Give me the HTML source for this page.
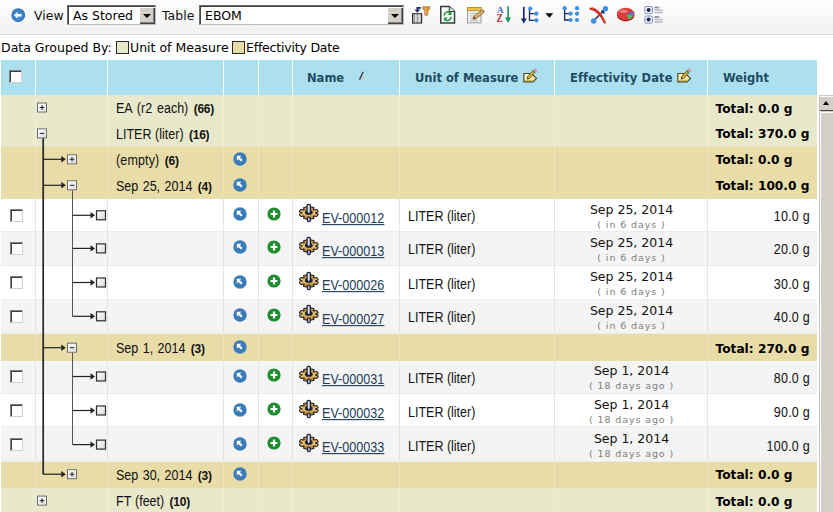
<!DOCTYPE html>
<html lang="en"><head><meta charset="utf-8"><title>EBOM</title>
<style>
html,body{margin:0;padding:0}
body{width:833px;height:512px;position:relative;overflow:hidden;background:#fff;font-family:"DejaVu Sans","Liberation Sans",sans-serif;font-size:11px;color:#000}
.abs{position:absolute}
.toolbar{position:absolute;left:0;top:0;width:833px;height:34px;border-bottom:1px solid #dcdcdc;background:linear-gradient(#fefefe 0,#f8f8f8 45%,#f1f1f1 100%)}
.toolbar .lbl{position:absolute;top:9px;font-size:12.5px;line-height:14px;color:#111}
.sel{position:absolute;top:5px;height:18px;border:1px solid #6b6b6b;border-right-color:#bdbdbd;border-bottom-color:#bdbdbd;box-shadow:inset 1px 1px 0 #404040;background:#fff;font-size:12.5px;line-height:19px}
.sel span{position:absolute;left:5px;top:0;white-space:nowrap}
.sel .btn{position:absolute;right:0;top:1px;width:16px;height:16.5px;background:#d4d0c8;box-shadow:inset 1px 1px 0 #fff,inset -1px -1px 0 #404040,inset -2px -2px 0 #808080}
.sel .btn:after{content:"";position:absolute;left:4px;top:6.500px;border:4px solid transparent;border-top:4px solid #000;border-bottom:none}
.tico{position:absolute;top:5px;width:20px;height:20px}
.grp{position:absolute;left:1px;top:41px;height:14px;line-height:14px;font-size:12.5px;white-space:nowrap}
.sw{position:absolute;top:41px;width:11px;height:11px;border:1px solid #2a2a2a}
.thead{position:absolute;left:0;top:60px;width:817px;height:35px}
.th{position:absolute;top:0;height:35px;background:#ade0ef}
.ht{position:absolute;top:11px;font-weight:bold;font-size:11.5px;line-height:14px;color:#214a63;white-space:nowrap}
.sort{position:absolute;left:64.700px;top:10.500px}
.edit{position:absolute;top:7.500px;width:16px;height:16px}
.cb{position:absolute;left:9px;width:11px;height:11px;background:#fff;border:1px solid #808080;border-right-color:#d4d0c8;border-bottom-color:#d4d0c8;box-shadow:inset 1px 1px 0 #404040}
.th .cb{top:10.300px;left:7.700px}
.tbody{position:absolute;left:0;top:0;width:817px;height:512px}
.row{position:absolute;left:1px;width:816px;white-space:nowrap}
.row.g1{background:#e8e8cb}
.row.g2{background:#e8dca8}
.row.item{background:#fff;box-shadow:inset 0 -1px 0 #ebebeb}
.row.item.a1{background:#f4f4f4}
.vd{position:absolute;top:0;bottom:0;width:1px;background:rgba(255,255,255,.25)}
.item .vd{background:#e4e4e8}
.row .cb{top:10px}
.gl{position:absolute;left:115px;top:7px;font-family:"Liberation Sans",sans-serif;font-size:12.5px;line-height:14px;color:#111;word-spacing:1px;transform:scaleY(1.1);transform-origin:0 11.3px}
.gl b{font-size:12px;margin-left:5.400px;letter-spacing:-.25px;word-spacing:0}
.tot{position:absolute;left:714.5px;top:6.5px;font-weight:bold;font-size:12.2px;line-height:14px;color:#000}
.ic{position:absolute}
.nav{left:232.300px;top:5px;width:14px;height:14px}
.item .nav{top:8.500px}
.add{left:266.100px;top:7.700px;width:14px;height:14px}
.gear{left:298px;top:4.500px;width:20px;height:20px}
.lnk{position:absolute;left:321px;top:13px;font-family:"Liberation Sans",sans-serif;font-size:12.6px;line-height:14px;color:#1c3a5a;text-decoration:underline;transform:scaleY(1.1);transform-origin:0 11.3px}
.uom{position:absolute;left:407px;top:11.500px;font-family:"Liberation Sans",sans-serif;font-size:12.5px;line-height:14px;color:#111;transform:scaleY(1.1);transform-origin:0 11.3px}
.dt{position:absolute;left:554px;width:153px;top:4px;text-align:center;font-size:12.5px;line-height:14px;color:#111}
.rel{position:absolute;left:554px;width:153px;top:20px;text-align:center;font-size:9.5px;line-height:12px;color:#7e7e7e;letter-spacing:.9px}
.wt{position:absolute;right:7px;top:11.500px;letter-spacing:.25px;font-family:"Liberation Sans",sans-serif;font-size:12.5px;line-height:14px;color:#111;transform:scaleY(1.1);transform-origin:0 11.3px}
.tree{position:absolute}
.sbar{position:absolute;left:819px;top:95px;width:14px;height:417px;background:#d3cfc7;border-left:1px solid #c2c2c2;border-top:1px solid #c8c8c8;box-shadow:inset 1px 1px 0 #fff}
.sbar .up{position:absolute;left:0;top:1px;width:14px;height:13px;background:#d3cfc7;border-bottom:1.500px solid #4a4846}
.sbar .up:after{content:"";position:absolute;left:3.200px;top:3.700px;border:3.600px solid transparent;border-bottom:4px solid #000;border-top:none}
.sbar .gap{position:absolute;left:1px;top:15.500px;width:13px;height:1px;background:#fff}

.ct{position:absolute;left:0;width:816px;height:34px}

</style></head>
<body>
<svg width="0" height="0" style="position:absolute">
<defs>
<radialGradient id="gb" cx="40%" cy="35%" r="70%"><stop offset="0" stop-color="#5fa0d8"/><stop offset="1" stop-color="#2a6fb0"/></radialGradient>
<radialGradient id="gg" cx="40%" cy="35%" r="70%"><stop offset="0" stop-color="#3db54a"/><stop offset="1" stop-color="#168a2a"/></radialGradient>
<linearGradient id="ggold" x1="0" y1="0" x2="0" y2="1"><stop offset="0" stop-color="#b88a34"/><stop offset=".5" stop-color="#ecc878"/><stop offset="1" stop-color="#b07c28"/></linearGradient>
<symbol id="i-nav" viewBox="0 0 14 14"><circle cx="7" cy="7" r="6.700" fill="#3a7cba"/><path d="M3.800 3.800h4.600l-1.500 1.500 2.700 2.700-1.600 1.600-2.700-2.700-1.500 1.500z" fill="#fff"/></symbol>
<symbol id="i-add" viewBox="0 0 14 14"><circle cx="7" cy="7" r="6.600" fill="#1f8c2e"/><path d="M7 3.600v6.800M3.600 7h6.800" stroke="#fff" stroke-width="2.200" fill="none"/></symbol>
<symbol id="i-gear" viewBox="0 0 20 20"><path d="M10.6 5.9L11.9 4.3L14.6 5.0L13.7 6.8L14.9 7.5L17.6 6.9L18.7 8.6L16.1 9.5L16.1 10.5L18.7 11.4L17.6 13.1L14.9 12.5L13.7 13.2L14.6 15.0L11.9 15.7L10.6 14.1L9.0 14.1L7.7 15.7L5.0 15.0L5.9 13.2L4.7 12.5L2.0 13.1L0.9 11.4L3.5 10.5L3.5 9.5L0.9 8.6L2.0 6.9L4.7 7.5L5.9 6.8L5.0 5.0L7.7 4.3L9.0 5.9z" fill="#cfa048" stroke="#1e1810" stroke-width="1.900" stroke-linejoin="round"/><path d="M10.6 5.9L11.9 4.3L14.6 5.0L13.7 6.8L14.9 7.5L17.6 6.9L18.7 8.6L16.1 9.5L16.1 10.5L18.7 11.4L17.6 13.1L14.9 12.5L13.7 13.2L14.6 15.0L11.9 15.7L10.6 14.1L9.0 14.1L7.7 15.7L5.0 15.0L5.9 13.2L4.7 12.5L2.0 13.1L0.9 11.4L3.5 10.5L3.5 9.5L0.9 8.6L2.0 6.9L4.7 7.5L5.9 6.8L5.0 5.0L7.7 4.3L9.0 5.9z" fill="url(#ggold)" stroke="none"/><ellipse cx="9.800" cy="9.400" rx="3.900" ry="2.300" fill="#241e2a"/><rect x="8" y="1.400" width="3.500" height="8.800" rx="1.400" fill="#8f9cc8" stroke="#1c1e34" stroke-width="1.100"/><rect x="9" y="2.400" width="1.200" height="7.200" fill="#dfe6fa"/><rect x="8.300" y="14" width="3" height="4.800" rx="1.200" fill="#9aa6cc" stroke="#1c1e34" stroke-width="1.100"/></symbol>
<symbol id="i-edit" viewBox="0 0 16 16"><path d="M.8 5.500h6l3.500 1.800 3.300 3-3.500 3.600H.8z" fill="#f3ecb4" stroke="#4a4222" stroke-width="1.100" stroke-linejoin="round"/><path d="M1.600 12.800h8.200l2.600-2.700" stroke="#b8a040" stroke-width="1" fill="none"/><path d="M2 7h3.500" stroke="#fff" stroke-width="1.200"/><path d="M4.800 10.400L11.200 3.400" stroke="#5c4a18" stroke-width="3.200" stroke-linecap="butt"/><path d="M5.200 10L11 3.600" stroke="#d8b040" stroke-width="2" stroke-linecap="butt"/><path d="M3.600 11.700l1-2.200 1.400 1.300z" fill="#3a3010"/><path d="M10.300 4.400l1.500-1.600" stroke="#2c8a5c" stroke-width="2.400"/><circle cx="12" cy="2.500" r="1.500" fill="#e8949c" stroke="#b06470" stroke-width=".5"/></symbol>
</defs>
</svg>
<div class="toolbar">
<svg class="abs" style="left:10.600px;top:8.100px" width="14.400" height="14.400" viewBox="0 0 14 14"><circle cx="7" cy="7" r="6.700" fill="#3676b6"/><circle cx="7" cy="7" r="5.300" fill="#3f86c8"/><path d="M2.800 7l3.600-3.300v2.100h3.800v2.400h-3.800v2.100z" fill="#fff"/></svg>
<span class="lbl" style="left:34px">View</span>
<div class="sel" style="left:67px;width:87px"><span>As Stored</span><i class="btn"></i></div>
<span class="lbl" style="left:162px">Table</span>
<div class="sel" style="left:199px;width:203px"><span>EBOM</span><i class="btn"></i></div>
<!-- column filter -->
<svg class="tico" style="left:411px" viewBox="0 0 20 20"><rect x="1.600" y="8.800" width="9" height="9.200" fill="#cfcfcf" stroke="#2c2c2c" stroke-width="1.200"/><path d="M4.600 9.300v8.200M7.700 9.300v8.200" stroke="#fff" stroke-width="1"/><path d="M3.800 9.300v8.200M6.900 9.300v8.200" stroke="#666" stroke-width=".7"/><path d="M9.800 2.800H6.400V4.800" stroke="#1a2568" stroke-width="1.800" fill="none"/><path d="M3.600 4.600h5.600L6.400 7.800z" fill="#1a2568"/><path d="M11.800 1.800h7v2l-2 2.200v4.200h-3V6l-2-2.200z" fill="#dc9438" stroke="#b06a1c" stroke-width=".7"/><path d="M14.800 3v6.600" stroke="#f0b868" stroke-width="1"/></svg>
<!-- refresh page -->
<svg class="tico" style="left:439px" viewBox="0 0 20 20"><path d="M1.800 1.500h8.500l5.200 5v11.400h-13.700z" fill="#fff" stroke="#3a3a3a" stroke-width="1.500"/><path d="M10.300 1.500v5h5.200" fill="#e8e8e8" stroke="#3a3a3a" stroke-width="1.100"/><path d="M5.200 10.600a3.600 3.600 0 0 1 6-2.800" stroke="#239a3c" stroke-width="1.700" fill="none"/><path d="M12.600 6v4h-4z" fill="#239a3c"/><path d="M12.200 11.800a3.600 3.600 0 0 1-6 2.800" stroke="#239a3c" stroke-width="1.700" fill="none"/><path d="M4.800 16.400v-4h4z" fill="#239a3c"/></svg>
<!-- notepad edit -->
<svg class="tico" style="left:466px" viewBox="0 0 20 20"><rect x="1.500" y="2.500" width="13.500" height="15.300" fill="#ececec" stroke="#9a9a9a" stroke-width="1"/><rect x="1.500" y="2.500" width="13.500" height="3.200" fill="#e6c24a" stroke="#b89020" stroke-width=".8"/><path d="M4 8.600h8M4 11h5M4 13.400h4M4 15.700h8" stroke="#b8b8b8" stroke-width=".9"/><path d="M9 12.400L16.600 6.400" stroke="#8a6a3a" stroke-width="3.800" stroke-linecap="round"/><path d="M9.200 12.250L16.400 6.550" stroke="#d9b070" stroke-width="2.300" stroke-linecap="round"/><path d="M6.600 14.400l1.300-2.900 1.900 2.300z" fill="#5a4020"/></svg>
<!-- sort A-Z -->
<svg class="tico" style="left:496px" viewBox="0 0 20 20"><text x="1" y="7.800" font-family="Liberation Serif,serif" font-weight="bold" font-size="9" fill="#3b62c4">A</text><text transform="translate(.6 17.400) scale(.82 1)" font-family="Liberation Serif,serif" font-weight="bold" font-size="11.500" fill="#c8303a">Z</text><path d="M12.100 1.200v13" stroke="#1d9654" stroke-width="1.600"/><path d="M9.100 12.400h6L12.100 18z" fill="#1d9654"/></svg>
<!-- sort tree -->
<svg class="tico" style="left:520px" viewBox="0 0 20 20"><path d="M3.800 1.800v13" stroke="#1b2a70" stroke-width="1.700"/><path d="M.8 13.600h6L3.800 18.600z" fill="#1b2a70"/><path d="M9.500 4.500v10.800h5M9.500 8.700h5" stroke="#1c2c58" stroke-width="1.300" fill="none"/><circle cx="10.300" cy="3.600" r="2.100" fill="#3c90e4"/><circle cx="16.300" cy="8.700" r="2.100" fill="#3c90e4"/><circle cx="16.300" cy="15.300" r="2.100" fill="#3c90e4"/></svg>
<svg class="abs" style="left:545px;top:12px" width="9" height="7" viewBox="0 0 9 7"><path d="M.5 1.200h7.800L4.400 5.800z" fill="#000"/></svg>
<!-- tree dots -->
<svg class="tico" style="left:561px" viewBox="0 0 20 20"><path d="M3.600 4v11h4.500M3.600 8.700h4.500" stroke="#1c2c58" stroke-width="1.300" fill="none"/><circle cx="3.600" cy="3.200" r="2.100" fill="#3c90e4"/><circle cx="9.600" cy="8.700" r="2.100" fill="#3c90e4"/><circle cx="9.600" cy="15" r="2.100" fill="#3c90e4"/><circle cx="16" cy="3.200" r="2.100" fill="#3c90e4"/><circle cx="16" cy="8.700" r="2.100" fill="#3c90e4"/><circle cx="16" cy="15" r="2.100" fill="#3c90e4"/></svg>
<!-- disconnect -->
<svg class="tico" style="left:589px" viewBox="0 0 20 20"><path d="M4.500 16L16.500 3.800" stroke="#1c2c58" stroke-width="1.300"/><path d="M1.500 3.600C7 4.500 12 9.500 15.800 17.500" stroke="#c42c18" stroke-width="2.300" fill="none" stroke-linecap="round"/><path d="M3 2.600C8.500 4 13 8 15.800 17.500" stroke="#d8503c" stroke-width="1" fill="none"/><circle cx="4.600" cy="16" r="2.700" fill="#3c90e4"/><circle cx="16.400" cy="3.800" r="2.700" fill="#3c90e4"/><path d="M12.500 5.500l3 3" stroke="#14205a" stroke-width="1.600"/></svg>
<!-- pie -->
<svg class="tico" style="left:616px" viewBox="0 0 20 20"><ellipse cx="9.700" cy="10.200" rx="8.700" ry="6.200" fill="#9c1c1c"/><ellipse cx="9.700" cy="8.900" rx="8.700" ry="6.200" fill="#dc3c3c"/><path d="M10.500 9.600L16.200 6.400a8 5.600 0 0 1 1.200 3.800z" fill="#4a7ae0"/><path d="M10.500 9.600L17 10.400a8 5 0 0 1-4.600 3.900z" fill="#4cbf5c"/><ellipse cx="7.500" cy="6.200" rx="4.500" ry="1.800" fill="#f4a0a0" opacity=".6"/></svg>
<!-- list options -->
<svg class="tico" style="left:644px" viewBox="0 0 20 20"><rect x=".8" y="1.500" width="7.600" height="7.200" rx="1.500" fill="#eef2fa" stroke="#7f92b8" stroke-width="1"/><circle cx="4.600" cy="5.100" r="2" fill="#1c2c58"/><rect x=".8" y="11" width="7.600" height="7.200" rx="1.500" fill="#eef2fa" stroke="#7f92b8" stroke-width="1"/><circle cx="4.600" cy="14.600" r="2" fill="#1c2c58"/><path d="M10.500 2.500h5M10.500 5h8M10.500 7.500h8M10.500 12h5M10.500 14.500h8M10.500 17h8" stroke="#b4b8c0" stroke-width="1.300"/><path d="M10.500 2.500h4M10.500 12h4" stroke="#8a8e98" stroke-width="1.300"/></svg>
</div>
<div class="grp">Data Grouped By:</div>
<i class="sw" style="left:116px;background:#e8e8cb"></i>
<div class="grp" style="left:130px">Unit of Measure</div>
<i class="sw" style="left:232px;background:#e8dca8"></i>
<div class="grp" style="left:246px;letter-spacing:-.2px">Effectivity Date</div>
<div class="thead">
<div class="th" style="left:1px;width:34px"><span class="cb"></span></div>
<div class="th" style="left:36px;width:71px"></div>
<div class="th" style="left:108px;width:115px"></div>
<div class="th" style="left:224px;width:34px"></div>
<div class="th" style="left:259px;width:33px"></div>
<div class="th" style="left:293px;width:106px"><span class="ht" style="left:14px">Name</span><svg class="sort" width="9" height="10" viewBox="0 0 9 10"><path d="M4.800 4.500l2.400 4h-4.500z" fill="#d8c4c8"/><path d="M1.500 8.800L5.200 .8" stroke="#3c3c40" stroke-width="1.400" fill="none"/></svg></div>
<div class="th" style="left:400px;width:154px"><span class="ht" style="left:15px">Unit of Measure</span><svg class="edit" style="left:123px"><use href="#i-edit"/></svg></div>
<div class="th" style="left:555px;width:152px"><span class="ht" style="left:15px;letter-spacing:.1px">Effectivity Date</span><svg class="edit" style="left:121.500px"><use href="#i-edit"/></svg></div>
<div class="th" style="left:708px;width:109px"><span class="ht" style="left:15px">Weight</span></div>
</div>
<div class="tbody">
<div class="row g1" style="top:95px;height:26px"><i class="vd" style="left:34px"></i><i class="vd" style="left:106px"></i><i class="vd" style="left:222px"></i><i class="vd" style="left:257px"></i><i class="vd" style="left:291px"></i><i class="vd" style="left:398px"></i><i class="vd" style="left:553px"></i><i class="vd" style="left:706px"></i><div class="ct" style="top:0.0px"><span class="gl" style="word-spacing:1.400px">EA (r2 each)<b>(66)</b></span><span class="tot">Total: 0.0 g</span></div></div>
<div class="row g1" style="top:121px;height:26px"><i class="vd" style="left:34px"></i><i class="vd" style="left:106px"></i><i class="vd" style="left:222px"></i><i class="vd" style="left:257px"></i><i class="vd" style="left:291px"></i><i class="vd" style="left:398px"></i><i class="vd" style="left:553px"></i><i class="vd" style="left:706px"></i><div class="ct" style="top:-0.1px"><span class="gl" style="word-spacing:.200px">LITER (liter)<b>(16)</b></span><span class="tot">Total: 370.0 g</span></div></div>
<div class="row g2" style="top:147px;height:26px"><i class="vd" style="left:34px"></i><i class="vd" style="left:106px"></i><i class="vd" style="left:222px"></i><i class="vd" style="left:257px"></i><i class="vd" style="left:291px"></i><i class="vd" style="left:398px"></i><i class="vd" style="left:553px"></i><i class="vd" style="left:706px"></i><div class="ct" style="top:-0.2px"><span class="gl" style="word-spacing:0;letter-spacing:.14px">(empty)<b>(6)</b></span><svg class="ic nav"><use href="#i-nav"/></svg><span class="tot">Total: 0.0 g</span></div></div>
<div class="row g2" style="top:173px;height:26px"><i class="vd" style="left:34px"></i><i class="vd" style="left:106px"></i><i class="vd" style="left:222px"></i><i class="vd" style="left:257px"></i><i class="vd" style="left:291px"></i><i class="vd" style="left:398px"></i><i class="vd" style="left:553px"></i><i class="vd" style="left:706px"></i><div class="ct" style="top:-0.2px"><span class="gl" style="word-spacing:1px">Sep 25, 2014<b>(4)</b></span><svg class="ic nav"><use href="#i-nav"/></svg><span class="tot">Total: 100.0 g</span></div></div>
<div class="row item a0" style="top:199px;height:33px"><i class="vd" style="left:34px"></i><i class="vd" style="left:106px"></i><i class="vd" style="left:222px"></i><i class="vd" style="left:257px"></i><i class="vd" style="left:291px"></i><i class="vd" style="left:398px"></i><i class="vd" style="left:553px"></i><i class="vd" style="left:706px"></i><div class="ct" style="top:-0.2px"><span class="cb"></span><svg class="ic nav"><use href="#i-nav"/></svg><svg class="ic add"><use href="#i-add"/></svg><svg class="ic gear"><use href="#i-gear"/></svg><a class="lnk" href="#">EV-000012</a><span class="uom">LITER (liter)</span><span class="dt">Sep 25, 2014</span><span class="rel">( in 6 days )</span><span class="wt">10.0 g</span></div></div>
<div class="row item a1" style="top:232px;height:34px"><i class="vd" style="left:34px"></i><i class="vd" style="left:106px"></i><i class="vd" style="left:222px"></i><i class="vd" style="left:257px"></i><i class="vd" style="left:291px"></i><i class="vd" style="left:398px"></i><i class="vd" style="left:553px"></i><i class="vd" style="left:706px"></i><div class="ct" style="top:-0.1px"><span class="cb"></span><svg class="ic nav"><use href="#i-nav"/></svg><svg class="ic add"><use href="#i-add"/></svg><svg class="ic gear"><use href="#i-gear"/></svg><a class="lnk" href="#">EV-000013</a><span class="uom">LITER (liter)</span><span class="dt">Sep 25, 2014</span><span class="rel">( in 6 days )</span><span class="wt">20.0 g</span></div></div>
<div class="row item a0" style="top:266px;height:34px"><i class="vd" style="left:34px"></i><i class="vd" style="left:106px"></i><i class="vd" style="left:222px"></i><i class="vd" style="left:257px"></i><i class="vd" style="left:291px"></i><i class="vd" style="left:398px"></i><i class="vd" style="left:553px"></i><i class="vd" style="left:706px"></i><div class="ct" style="top:0.0px"><span class="cb"></span><svg class="ic nav"><use href="#i-nav"/></svg><svg class="ic add"><use href="#i-add"/></svg><svg class="ic gear"><use href="#i-gear"/></svg><a class="lnk" href="#">EV-000026</a><span class="uom">LITER (liter)</span><span class="dt">Sep 25, 2014</span><span class="rel">( in 6 days )</span><span class="wt">30.0 g</span></div></div>
<div class="row item a1" style="top:300px;height:34px"><i class="vd" style="left:34px"></i><i class="vd" style="left:106px"></i><i class="vd" style="left:222px"></i><i class="vd" style="left:257px"></i><i class="vd" style="left:291px"></i><i class="vd" style="left:398px"></i><i class="vd" style="left:553px"></i><i class="vd" style="left:706px"></i><div class="ct" style="top:-0.2px"><span class="cb"></span><svg class="ic nav"><use href="#i-nav"/></svg><svg class="ic add"><use href="#i-add"/></svg><svg class="ic gear"><use href="#i-gear"/></svg><a class="lnk" href="#">EV-000027</a><span class="uom">LITER (liter)</span><span class="dt">Sep 25, 2014</span><span class="rel">( in 6 days )</span><span class="wt">40.0 g</span></div></div>
<div class="row g2" style="top:334px;height:27px"><i class="vd" style="left:34px"></i><i class="vd" style="left:106px"></i><i class="vd" style="left:222px"></i><i class="vd" style="left:257px"></i><i class="vd" style="left:291px"></i><i class="vd" style="left:398px"></i><i class="vd" style="left:553px"></i><i class="vd" style="left:706px"></i><div class="ct" style="top:1.2px"><span class="gl" style="word-spacing:1px">Sep 1, 2014<b>(3)</b></span><svg class="ic nav"><use href="#i-nav"/></svg><span class="tot">Total: 270.0 g</span></div></div>
<div class="row item a1" style="top:361px;height:33px"><i class="vd" style="left:34px"></i><i class="vd" style="left:106px"></i><i class="vd" style="left:222px"></i><i class="vd" style="left:257px"></i><i class="vd" style="left:291px"></i><i class="vd" style="left:398px"></i><i class="vd" style="left:553px"></i><i class="vd" style="left:706px"></i><div class="ct" style="top:-1.0px"><span class="cb"></span><svg class="ic nav"><use href="#i-nav"/></svg><svg class="ic add"><use href="#i-add"/></svg><svg class="ic gear"><use href="#i-gear"/></svg><a class="lnk" href="#">EV-000031</a><span class="uom">LITER (liter)</span><span class="dt">Sep 1, 2014</span><span class="rel">( 18 days ago )</span><span class="wt">80.0 g</span></div></div>
<div class="row item a0" style="top:394px;height:33px"><i class="vd" style="left:34px"></i><i class="vd" style="left:106px"></i><i class="vd" style="left:222px"></i><i class="vd" style="left:257px"></i><i class="vd" style="left:291px"></i><i class="vd" style="left:398px"></i><i class="vd" style="left:553px"></i><i class="vd" style="left:706px"></i><div class="ct" style="top:0.0px"><span class="cb"></span><svg class="ic nav"><use href="#i-nav"/></svg><svg class="ic add"><use href="#i-add"/></svg><svg class="ic gear"><use href="#i-gear"/></svg><a class="lnk" href="#">EV-000032</a><span class="uom">LITER (liter)</span><span class="dt">Sep 1, 2014</span><span class="rel">( 18 days ago )</span><span class="wt">90.0 g</span></div></div>
<div class="row item a1" style="top:427px;height:35px"><i class="vd" style="left:34px"></i><i class="vd" style="left:106px"></i><i class="vd" style="left:222px"></i><i class="vd" style="left:257px"></i><i class="vd" style="left:291px"></i><i class="vd" style="left:398px"></i><i class="vd" style="left:553px"></i><i class="vd" style="left:706px"></i><div class="ct" style="top:1.1px"><span class="cb"></span><svg class="ic nav"><use href="#i-nav"/></svg><svg class="ic add"><use href="#i-add"/></svg><svg class="ic gear"><use href="#i-gear"/></svg><a class="lnk" href="#">EV-000033</a><span class="uom">LITER (liter)</span><span class="dt">Sep 1, 2014</span><span class="rel">( 18 days ago )</span><span class="wt">100.0 g</span></div></div>
<div class="row g2" style="top:462px;height:26px"><i class="vd" style="left:34px"></i><i class="vd" style="left:106px"></i><i class="vd" style="left:222px"></i><i class="vd" style="left:257px"></i><i class="vd" style="left:291px"></i><i class="vd" style="left:398px"></i><i class="vd" style="left:553px"></i><i class="vd" style="left:706px"></i><div class="ct" style="top:-0.3px"><span class="gl" style="word-spacing:1px">Sep 30, 2014<b>(3)</b></span><svg class="ic nav"><use href="#i-nav"/></svg><span class="tot">Total: 0.0 g</span></div></div>
<div class="row g1" style="top:488px;height:26px"><i class="vd" style="left:34px"></i><i class="vd" style="left:106px"></i><i class="vd" style="left:222px"></i><i class="vd" style="left:257px"></i><i class="vd" style="left:291px"></i><i class="vd" style="left:398px"></i><i class="vd" style="left:553px"></i><i class="vd" style="left:706px"></i><div class="ct" style="top:0.1px"><span class="gl" style="word-spacing:.500px">FT (feet)<b>(10)</b></span><span class="tot">Total: 0.0 g</span></div></div>
<svg class="tree" width="120" height="417" viewBox="0 0 120 417" style="top:95px;left:0"><defs><linearGradient id="bx" x1="0" y1="0" x2="1" y2="1"><stop offset="0" stop-color="#fff"/><stop offset="1" stop-color="#d8d8d8"/></linearGradient></defs><path d="M43.200 43V379.2" stroke="#262626" stroke-width="1.700" fill="none"/><rect x="37.5" y="8.0" width="9" height="9" fill="#fff" stroke="#6a6a6a" stroke-width="1"/><rect x="38.5" y="9.0" width="7" height="7" fill="url(#bx)"/><path d="M39.7 12.5h4.600" stroke="#222" stroke-width="1"/><path d="M42 10.2v4.600" stroke="#222" stroke-width="1"/><rect x="37.5" y="33.900000000000006" width="9" height="9" fill="#fff" stroke="#6a6a6a" stroke-width="1"/><rect x="38.5" y="34.900000000000006" width="7" height="7" fill="url(#bx)"/><path d="M39.7 38.400000000000006h4.600" stroke="#222" stroke-width="1"/><path d="M43 64.30000000000001H62.8" stroke="#222" stroke-width="1.2" fill="none"/><path d="M65.8 64.30000000000001l-4.5 -3.2v6.4z" fill="#222"/><rect x="67.5" y="59.80000000000001" width="9" height="9" fill="#fff" stroke="#6a6a6a" stroke-width="1"/><rect x="68.5" y="60.80000000000001" width="7" height="7" fill="url(#bx)"/><path d="M69.7 64.30000000000001h4.600" stroke="#222" stroke-width="1"/><path d="M72 62.000000000000014v4.600" stroke="#222" stroke-width="1"/><path d="M43 90.30000000000001H62.8" stroke="#222" stroke-width="1.2" fill="none"/><path d="M65.8 90.30000000000001l-4.5 -3.2v6.4z" fill="#222"/><rect x="67.5" y="85.80000000000001" width="9" height="9" fill="#fff" stroke="#6a6a6a" stroke-width="1"/><rect x="68.5" y="86.80000000000001" width="7" height="7" fill="url(#bx)"/><path d="M69.7 90.30000000000001h4.600" stroke="#222" stroke-width="1"/><path d="M72.5 120.30000000000001H92" stroke="#222" stroke-width="1.2" fill="none"/><path d="M95 120.30000000000001l-4.5 -3.2v6.4z" fill="#222"/><rect x="96.5" y="115.80000000000001" width="9" height="9" fill="url(#bx)" stroke="#2e2e2e" stroke-width="1.2"/><path d="M72.5 153.4H92" stroke="#222" stroke-width="1.2" fill="none"/><path d="M95 153.4l-4.5 -3.2v6.4z" fill="#222"/><rect x="96.5" y="148.9" width="9" height="9" fill="url(#bx)" stroke="#2e2e2e" stroke-width="1.2"/><path d="M72.5 187.5H92" stroke="#222" stroke-width="1.2" fill="none"/><path d="M95 187.5l-4.5 -3.2v6.4z" fill="#222"/><rect x="96.5" y="183.0" width="9" height="9" fill="url(#bx)" stroke="#2e2e2e" stroke-width="1.2"/><path d="M72.5 221.3H92" stroke="#222" stroke-width="1.2" fill="none"/><path d="M95 221.3l-4.5 -3.2v6.4z" fill="#222"/><rect x="96.5" y="216.8" width="9" height="9" fill="url(#bx)" stroke="#2e2e2e" stroke-width="1.2"/><path d="M43 252.7H62.8" stroke="#222" stroke-width="1.2" fill="none"/><path d="M65.8 252.7l-4.5 -3.2v6.4z" fill="#222"/><rect x="67.5" y="248.2" width="9" height="9" fill="#fff" stroke="#6a6a6a" stroke-width="1"/><rect x="68.5" y="249.2" width="7" height="7" fill="url(#bx)"/><path d="M69.7 252.7h4.600" stroke="#222" stroke-width="1"/><path d="M72.5 281.5H92" stroke="#222" stroke-width="1.2" fill="none"/><path d="M95 281.5l-4.5 -3.2v6.4z" fill="#222"/><rect x="96.5" y="277.0" width="9" height="9" fill="url(#bx)" stroke="#2e2e2e" stroke-width="1.2"/><path d="M72.5 315.5H92" stroke="#222" stroke-width="1.2" fill="none"/><path d="M95 315.5l-4.5 -3.2v6.4z" fill="#222"/><rect x="96.5" y="311.0" width="9" height="9" fill="url(#bx)" stroke="#2e2e2e" stroke-width="1.2"/><path d="M72.5 349.6H92" stroke="#222" stroke-width="1.2" fill="none"/><path d="M95 349.6l-4.5 -3.2v6.4z" fill="#222"/><rect x="96.5" y="345.1" width="9" height="9" fill="url(#bx)" stroke="#2e2e2e" stroke-width="1.2"/><path d="M43 379.2H62.8" stroke="#222" stroke-width="1.2" fill="none"/><path d="M65.8 379.2l-4.5 -3.2v6.4z" fill="#222"/><rect x="67.5" y="374.7" width="9" height="9" fill="#fff" stroke="#6a6a6a" stroke-width="1"/><rect x="68.5" y="375.7" width="7" height="7" fill="url(#bx)"/><path d="M69.7 379.2h4.600" stroke="#222" stroke-width="1"/><path d="M72 376.9v4.600" stroke="#222" stroke-width="1"/><rect x="37.5" y="401.1" width="9" height="9" fill="#fff" stroke="#6a6a6a" stroke-width="1"/><rect x="38.5" y="402.1" width="7" height="7" fill="url(#bx)"/><path d="M39.7 405.6h4.600" stroke="#222" stroke-width="1"/><path d="M42 403.3v4.600" stroke="#222" stroke-width="1"/><path d="M72.5 95.30000000000001V221.3" stroke="#555" stroke-width="1" fill="none"/><path d="M72.5 257.7V349.6" stroke="#555" stroke-width="1" fill="none"/></svg>
</div>
<div class="sbar"><i class="up"></i><i class="gap"></i></div>
</body></html>
